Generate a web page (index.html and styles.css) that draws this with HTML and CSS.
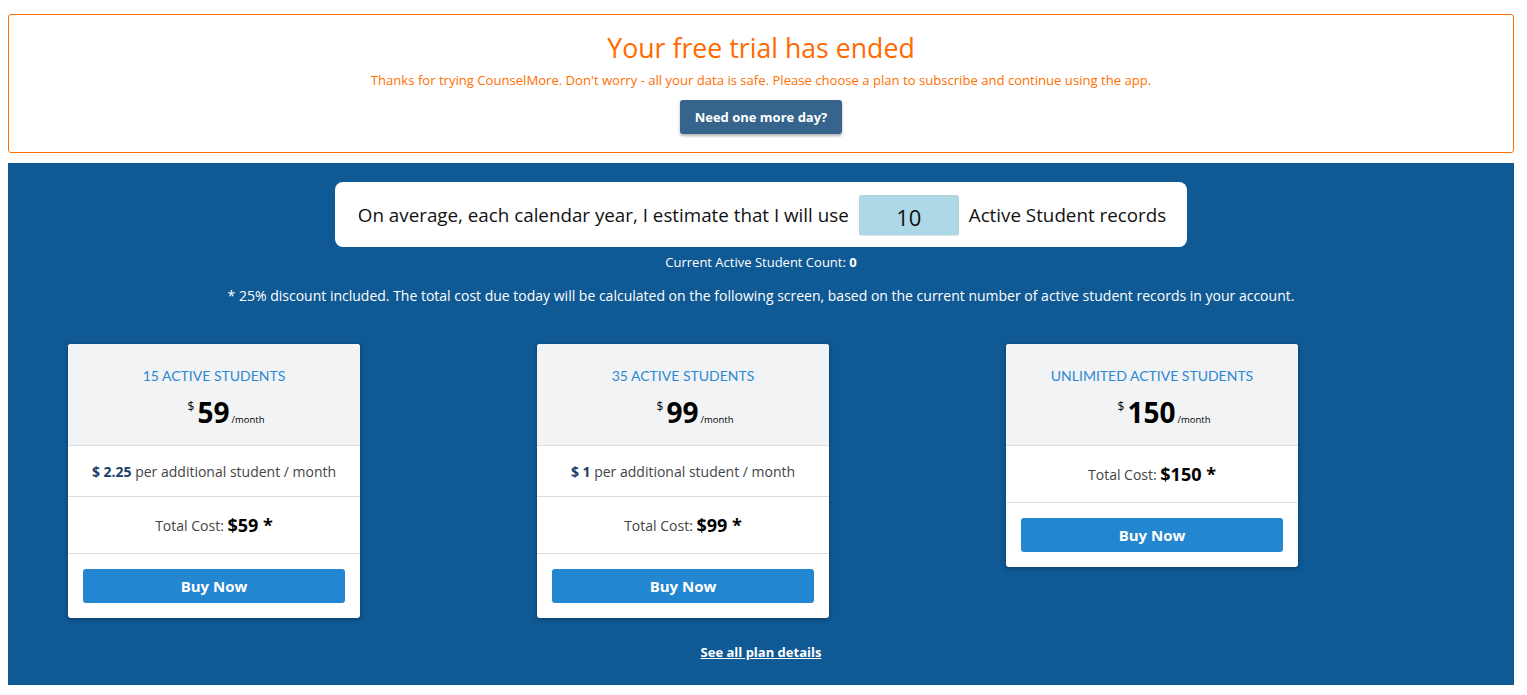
FILE: index.html
```html
<!DOCTYPE html>
<html>
<head>
<meta charset="utf-8">
<link rel="stylesheet" href="styles.css">
</head>
<body>
<div class="page">
  <section class="trial">
    <h1 class="trial-title">Your free trial has ended</h1>
    <p class="trial-text">Thanks for trying CounselMore. Don't worry - all your data is safe. Please choose a plan to subscribe and continue using the app.</p>
    <button class="extend-btn">Need one more day?</button>
  </section>

  <section class="plans">
    <div class="estimate">
      <span>On average, each calendar year, I estimate that I will use</span>
      <input class="estimate-input" type="text" value="10">
      <span>Active Student records</span>
    </div>
    <p class="current">Current Active Student Count: <b>0</b></p>
    <p class="note">* 25% discount included. The total cost due today will be calculated on the following screen, based on the current number of active student records in your account.</p>

    <div class="cards">
      <div class="card">
        <div class="card-head">
          <div class="plan-name">15 ACTIVE STUDENTS</div>
          <div class="price"><span class="cur">$</span><span class="amt">59</span><span class="per">/month</span></div>
        </div>
        <div class="row extra"><b>$ 2.25</b> per additional student / month</div>
        <div class="row total">Total Cost: <b>$59 *</b></div>
        <div class="buy"><button class="buy-btn">Buy Now</button></div>
      </div>
      <div class="card">
        <div class="card-head">
          <div class="plan-name">35 ACTIVE STUDENTS</div>
          <div class="price"><span class="cur">$</span><span class="amt">99</span><span class="per">/month</span></div>
        </div>
        <div class="row extra"><b>$ 1</b> per additional student / month</div>
        <div class="row total">Total Cost: <b>$99 *</b></div>
        <div class="buy"><button class="buy-btn">Buy Now</button></div>
      </div>
      <div class="card">
        <div class="card-head">
          <div class="plan-name">UNLIMITED ACTIVE STUDENTS</div>
          <div class="price"><span class="cur">$</span><span class="amt">150</span><span class="per">/month</span></div>
        </div>
        <div class="row total">Total Cost: <b>$150 *</b></div>
        <div class="buy"><button class="buy-btn">Buy Now</button></div>
      </div>
    </div>

    <div class="details"><a href="#" class="details-link">See all plan details</a></div>
  </section>
</div>
</body>
</html>
```

FILE: styles.css
```css
* { box-sizing: border-box; }
html, body { background: #fff; }
body {
  margin: 0;
  padding: 14px 13px 0 8px;
  font-family: "Open Sans", "Noto Sans", sans-serif;
}
.page { width: 1506px; }

.trial {
  border: 1px solid #ff7000;
  border-radius: 3px;
  text-align: center;
  padding: 15px 0 17px;
  height: 139px;
}
.trial-title {
  margin: 0;
  font-size: 26.7px;
  font-weight: 400;
  line-height: 36px;
  color: #ff6a00;
}
.trial-text {
  margin: 5px 0 0;
  font-size: 13.1px;
  line-height: 18px;
  color: #ff7000;
}
.extend-btn {
  margin-top: 11px;
  height: 34px;
  padding: 0 15px;
  border: 0;
  border-radius: 3px;
  background: #36648c;
  color: #fff;
  font-family: "Open Sans", sans-serif;
  font-weight: 700;
  font-size: 13px;
  box-shadow: 0 2px 3px rgba(0,0,0,0.3);
}

.plans {
  margin-top: 10px;
  background: #0f5994;
  padding: 19px 0 0;
  height: 522px;
  color: #fff;
}
.estimate {
  width: fit-content;
  height: 65px;
  margin: 0 auto;
  background: #fff;
  border-radius: 8px;
  display: flex;
  align-items: center;
  padding: 0 21px 0 23px;
  gap: 10px;
  color: #111;
  font-size: 18.8px;
  white-space: nowrap;
}
.estimate-input {
  flex: none;
  width: 100px;
  height: 41px;
  margin-top: 2px;
  background: #add8e6;
  border: 1px solid #b9d0d8;
  border-bottom-color: #dde3e6;
  border-radius: 3px;
  text-align: center;
  font-family: "Open Sans", sans-serif;
  font-size: 22px;
  color: #111;
  padding: 2px 0 0;
}
.current {
  margin: 7px 0 0;
  text-align: center;
  font-size: 13px;
  line-height: 17px;
}
.note {
  margin: 15px 0 0;
  text-align: center;
  font-size: 14px;
  line-height: 19px;
}

.cards {
  margin-top: 39px;
  padding-left: 60px;
  display: flex;
  align-items: flex-start;
  gap: 177px;
}
.card {
  width: 292px;
  background: #fff;
  border-radius: 3px;
  box-shadow: 0 1px 4px rgba(0,0,0,0.35);
  color: #333;
  text-align: center;
  overflow: hidden;
}
.card-head {
  background: #f2f3f5;
  height: 102px;
  padding-top: 22px;
  border-bottom: 1px solid #dcdde0;
}
.plan-name {
  font-family: Lato, "Open Sans", sans-serif;
  font-size: 14px;
  line-height: 20px;
  color: #2c88d2;
}
.price {
  margin-top: 4px;
  padding-left: 24px;
  color: #000;
  line-height: 34px;
}
.cur {
  font-size: 12px;
  vertical-align: 12px;
  margin-right: 3px;
}
.amt {
  font-size: 28px;
  font-weight: 700;
}
.per {
  font-size: 9.5px;
  margin-left: 2px;
}
.row {
  border-bottom: 1px solid #dcdde0;
  display: flex;
  align-items: center;
  justify-content: center;
  white-space: pre;
}
.extra {
  height: 51px;
  font-size: 14px;
  color: #444;
}
.extra b { color: #1c3e66; }
.total {
  height: 57px;
  font-size: 14px;
  color: #444;
}
.total b {
  font-size: 18px;
  color: #000;
}
.buy { padding: 15px 15px 15px; }
.buy-btn {
  width: 100%;
  height: 34px;
  border: 0;
  border-radius: 3px;
  background: #2386d1;
  color: #fff;
  font-family: "Open Sans", sans-serif;
  font-weight: 700;
  font-size: 15px;
}
.details {
  margin-top: 22px;
  text-align: center;
}
.details-link {
  color: #fff;
  font-weight: 700;
  font-size: 13px;
}
```
